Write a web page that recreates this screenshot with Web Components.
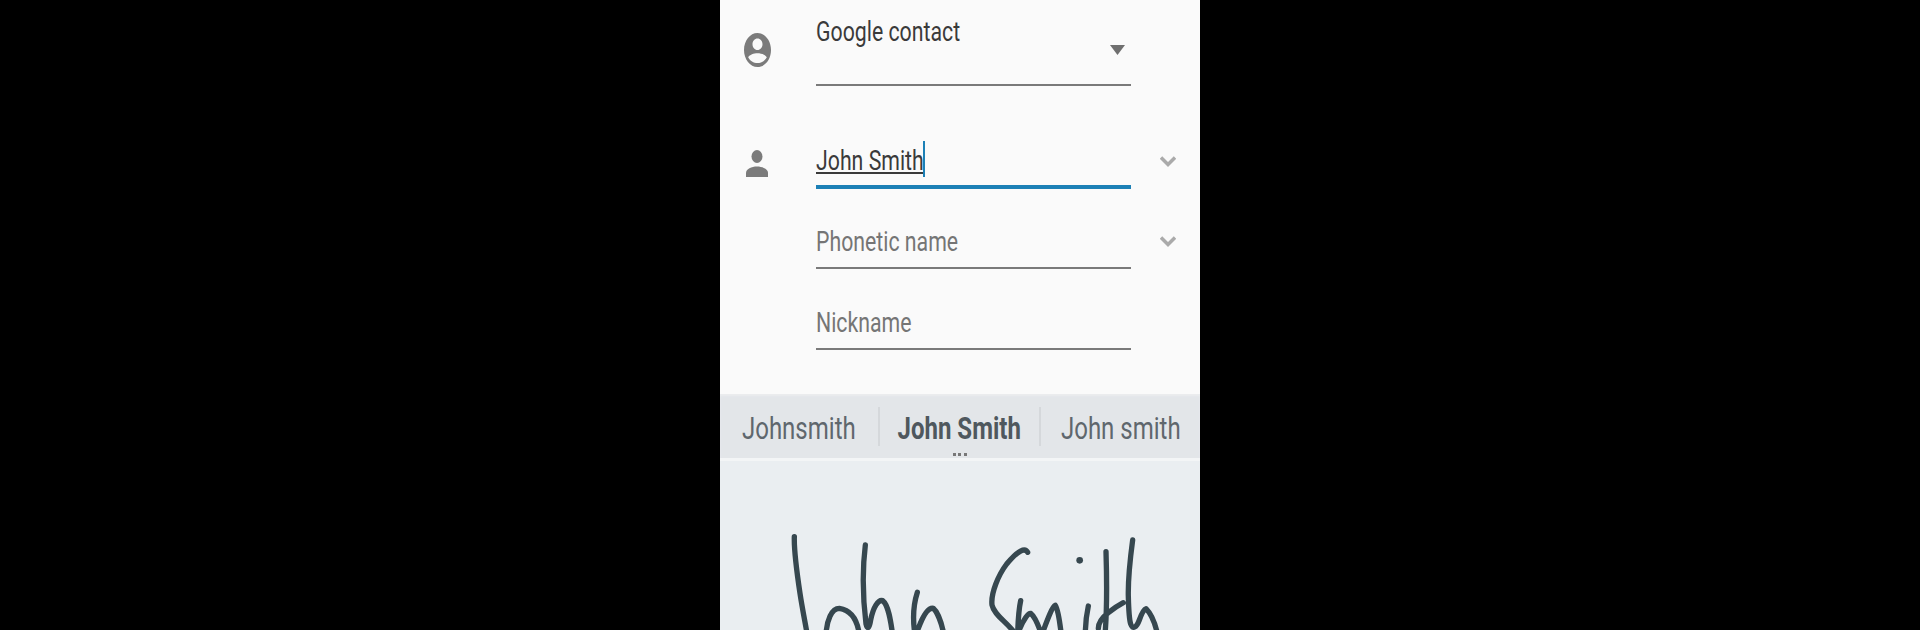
<!DOCTYPE html>
<html>
<head>
<meta charset="utf-8">
<title>Contact</title>
<style>
  html, body { margin: 0; height: 100%; background: #000; overflow: hidden; }
  body { display: flex; justify-content: center; font-family: Roboto, "Liberation Sans", sans-serif; }
</style>
</head>
<body>
<template id="contact-field-tpl">
  <style>
    :host { display: grid; grid-template-columns: 96px 315px 69px; box-sizing: border-box; }
    .icon { display: flex; justify-content: center; padding-right: 22px; padding-top: var(--icon-top, 0); }
    .field { box-sizing: border-box; height: var(--field-h, 41px); border-bottom: 2px solid #7a7a7a; position: relative; }
    :host([active]) .field { border-bottom: 4px solid #1c80b6; }
    .txt { display: inline-block; font-size: 28px; line-height: 32px; color: #757575; transform: scaleX(.76); transform-origin: left; white-space: nowrap; }
    :host([filled]) .txt { color: #3a3a3a; }
    .side { display: flex; justify-content: center; padding-left: 5px; padding-top: var(--side-top, 8px); }
  </style>
  <div class="icon"><slot name="icon"></slot></div>
  <div class="field"><span class="txt"><slot></slot></span><slot name="extra"></slot></div>
  <div class="side"><slot name="side"></slot></div>
</template>

<template id="suggestion-bar-tpl">
  <style>
    :host { display: block; box-sizing: border-box; height: 67px; background: #e3e6e9; border-bottom: 3px solid #f3f5f6; box-shadow: inset 0 2px 2px #ebedef; position: relative; }
    .row { display: grid; grid-template-columns: 160px 161px 159px; padding-top: 13px; }
    .dots { position: absolute; left: 233px; top: 59px; width: 14px; height: 3px; background: repeating-linear-gradient(90deg, #777 0 3px, transparent 3px 5.500px); }
  </style>
  <div class="row"><slot></slot></div>
  <div class="dots"></div>
</template>

<template id="suggestion-item-tpl">
  <style>
    :host { display: flex; justify-content: center; height: 39px; box-sizing: border-box; border-right: 2px solid #d5d8db; }
    :host(:last-child) { border-right: 0; }
    span { display: inline-block; font-size: 32px; line-height: 42px; height: 42px; color: #5f676d; transform: scaleX(.75); white-space: nowrap; }
    :host([main]) span { font-weight: 700; color: #4f585e; }
  </style>
  <span><slot></slot></span>
</template>

<template id="ink-pad-tpl">
  <style>
    :host { display: block; flex: 1; background: #eaeef1; overflow: hidden; }
    ::slotted(svg) { display: block; width: 480px; height: 169px; }
  </style>
  <slot></slot>
</template>

<template id="contact-screen-tpl">
  <style>
    :host { display: flex; flex-direction: column; width: 480px; height: 630px; background: #fafafa; overflow: hidden; }
    .form { height: 394px; box-sizing: border-box; }
  </style>
  <div class="form"><slot></slot></div>
  <slot name="bar"></slot>
  <slot name="pad"></slot>
</template>

<script>
function define(name, tplId) {
  customElements.define(name, class extends HTMLElement {
    constructor() {
      super();
      this.attachShadow({ mode: 'open' });
      this.shadowRoot.appendChild(document.getElementById(tplId).content.cloneNode(true));
    }
  });
}
define('contact-field', 'contact-field-tpl');
define('suggestion-bar', 'suggestion-bar-tpl');
define('suggestion-item', 'suggestion-item-tpl');
define('ink-pad', 'ink-pad-tpl');
define('contact-screen', 'contact-screen-tpl');
</script>

<contact-screen>
  <contact-field filled style="--field-h:86px;--icon-top:33px;--side-top:0">
    <svg slot="icon" width="27" height="34" viewBox="0 0 27 34"><path fill="#7b7b7b" fill-rule="evenodd" d="M13.5 0C6 0 0 7.600 0 17s6 17 13.500 17S27 26.400 27 17 21 0 13.500 0zm0 5.500c2.800 0 5 2.500 5 5.700s-2.200 5.800-5 5.800-5-2.600-5-5.800 2.200-5.700 5-5.700zM13.500 30c-3.900 0-7.500-2.200-9.300-5.800 1.500-2.500 5.500-4 9.300-4s7.800 1.500 9.300 4C21 27.800 17.400 30 13.500 30z"/></svg>
    <span style="display:block;padding-top:16px">Google contact</span>
    <svg slot="extra" style="position:absolute;left:294px;top:45px" width="15" height="10" viewBox="0 0 15 10"><path fill="#6f6f6f" d="M0 0h15L7.500 10z"/></svg>
  </contact-field>
  <contact-field filled active style="--field-h:103px;--icon-top:64px;--side-top:70px">
    <svg slot="icon" width="22" height="27" viewBox="0 0 22 27"><ellipse cx="11" cy="6.500" rx="5.500" ry="6.500" fill="#7b7b7b"/><path fill="#7b7b7b" d="M0 27v-4c0-4 5.500-6.500 11-6.500S22 19 22 23v4z"/></svg>
    <span style="display:block;padding-top:59px;text-decoration:underline;text-decoration-thickness:2px;text-underline-offset:2px">John Smith</span>
    <i slot="extra" style="position:absolute;left:107px;top:55px;width:2px;height:36px;background:#1c80b6"></i>
    <svg slot="side" width="16" height="11" viewBox="0 0 16 11"><path fill="none" stroke="#aaa" stroke-width="3.500" d="M1 1.500l7 7 7-7"/></svg>
  </contact-field>
  <contact-field style="--field-h:80px;--side-top:47px">
    <span style="display:block;padding-top:37px">Phonetic name</span>
    <svg slot="side" width="16" height="11" viewBox="0 0 16 11"><path fill="none" stroke="#aaa" stroke-width="3.500" d="M1 1.500l7 7 7-7"/></svg>
  </contact-field>
  <contact-field style="--field-h:81px">
    <span style="display:block;padding-top:38px">Nickname</span>
  </contact-field>

  <suggestion-bar slot="bar">
    <suggestion-item>Johnsmith</suggestion-item>
    <suggestion-item main>John Smith</suggestion-item>
    <suggestion-item>John smith</suggestion-item>
  </suggestion-bar>

  <ink-pad slot="pad">
    <svg viewBox="0 123 1440 507" fill="none" stroke="#36474f" stroke-width="16" stroke-linecap="round" stroke-linejoin="round">
      <path d="M223 350C222 380 228 440 240 520C246 560 254 600 262 645"/>
      <path d="M318 645C320 600 335 565 358 565C390 570 412 595 418 645"/>
      <path d="M436 375C428 440 428 530 438 612C442 630 448 625 452 600C460 560 475 538 488 542C505 555 512 600 518 645"/>
      <path d="M592 517C578 560 578 600 585 645M595 625C610 585 625 562 640 565C652 575 665 610 672 645"/>
      <path d="M923 397C915 382 895 390 860 432C835 465 812 520 816 555C822 585 860 605 885 640"/>
      <path d="M902 542C896 570 894 600 893 645M900 625C910 600 925 578 932 580C945 590 955 615 965 645C975 620 995 560 1006 556C1015 570 1020 610 1024 645"/>
      <path d="M1105 558C1098 590 1096 615 1096 645"/>
      <path d="M1079 421h.01" stroke-width="20"/>
      <path d="M1158 395C1160 460 1162 560 1155 645M1135 625C1135 605 1150 590 1165 578C1180 566 1195 556 1210 548"/>
      <path d="M1238 360C1230 420 1224 490 1225 530C1226 570 1228 600 1232 612C1238 630 1250 622 1258 600C1265 580 1272 568 1278 566C1292 580 1305 610 1312 640"/>
    </svg>
  </ink-pad>
</contact-screen>
</body>
</html>
